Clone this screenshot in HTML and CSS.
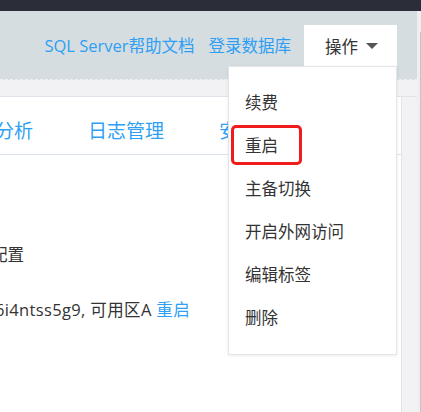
FILE: index.html
```html
<!DOCTYPE html>
<html lang="zh-CN">
<head>
<meta charset="utf-8">
<title>SQL Server 实例</title>
<link rel="stylesheet" href="styles.css">
</head>
<body>
<div class="topbar"></div>
<div class="main">
  <div class="page">
    <div class="header">
      <a class="hlink">SQL Server帮助文档</a>
      <a class="hlink">登录数据库</a>
      <div class="opbtn">操作<span class="caret"></span></div>
    </div>
    <div class="subbar"></div>
    <div class="card">
      <div class="card-inner">
        <div class="tabs">
          <span class="tab">分析</span>
          <span class="tab">日志管理</span>
          <span class="tab">安全</span>
        </div>
        <div class="body">
          <div class="line line-cfg">配置</div>
          <div class="line line-zone">6i4ntss5g9, 可用区A <a class="blue">重启</a></div>
        </div>
      </div>
    </div>
  </div>
  <div class="rail"><div class="rail-line"></div></div>
</div>

<div class="dropdown">
  <div class="item">续费</div>
  <div class="item">重启</div>
  <div class="item">主备切换</div>
  <div class="item">开启外网访问</div>
  <div class="item">编辑标签</div>
  <div class="item">删除</div>
</div>
<div class="highlight"></div>
</body>
</html>
```

FILE: styles.css
```css
* { box-sizing: border-box; }
html, body {
  margin: 0;
  padding: 0;
}
body {
  width: 421px;
  height: 412px;
  overflow: hidden;
  background: #f2f2f4;
  font-family: "Open Sans", "Noto Sans CJK SC", sans-serif;
  font-size: 16.5px;
  color: #333;
  position: relative;
}
.topbar {
  height: 11px;
  background: #2b2d38;
}
.main {
  display: flex;
  height: 401px;
}
.page {
  width: 417px;
  display: flex;
  flex-direction: column;
}
.header {
  height: 69px;
  background: #d5dde0;
  border-bottom: 1px dashed #eef1f3;
  display: flex;
  justify-content: flex-end;
  align-items: flex-start;
  padding: 14px 20px 0 0;
}
.hlink {
  color: #2f9ff5;
  margin-right: 14px;
  line-height: 41px;
  white-space: nowrap;
}
.hlink:nth-child(2) { margin-right: 13px; }
.opbtn {
  background: #fff;
  height: 41px;
  width: 93px;
  display: flex;
  align-items: center;
  padding-left: 21px;
  color: #333;
}
.caret {
  width: 0;
  height: 0;
  border-left: 6px solid transparent;
  border-right: 6px solid transparent;
  border-top: 6px solid #555;
  margin-left: 8px;
  margin-top: 1px;
}
.subbar {
  height: 17px;
  background: #f2f2f4;
  border-bottom: 1px solid #dfe4ea;
}
.card {
  flex: 1;
  width: 402px;
  background: #fff;
  border-right: 1px solid #dfe3e8;
  overflow: hidden;
}
.card-inner {
  margin-left: -5px;
}
.tabs {
  height: 58px;
  border-bottom: 1px solid #dbe3ec;
  display: flex;
  align-items: center;
  gap: 55px;
  padding-top: 8px;
  white-space: nowrap;
}
.tab {
  color: #2f9ff5;
  font-size: 19px;
}
.body {
  padding-top: 87px;
}
.line {
  height: 55px;
  white-space: nowrap;
}
.line-cfg {
  margin-left: -4px;
}
.line-zone {
  letter-spacing: 0.35px;
}
.blue { color: #2f9ff5; }
.rail {
  width: 4px;
  background: #efeff1;
  position: relative;
  display: flex;
  justify-content: flex-end;
  padding-top: 21px;
}
.rail-line {
  width: 1px;
  background: #c4c4c6;
}
.dropdown {
  position: absolute;
  top: 66px;
  left: 228px;
  width: 169px;
  height: 289px;
  background: #fff;
  border: 1px solid #e2e6ea;
  box-shadow: 0 1px 3px rgba(0, 0, 0, 0.08);
  padding-top: 14px;
}
.item {
  height: 43px;
  line-height: 43px;
  padding-left: 16px;
  color: #333;
  white-space: nowrap;
}
.highlight {
  position: absolute;
  left: 231px;
  top: 125px;
  width: 71px;
  height: 40px;
  border: 3px solid #f01c1c;
  border-radius: 5px;
}
```
